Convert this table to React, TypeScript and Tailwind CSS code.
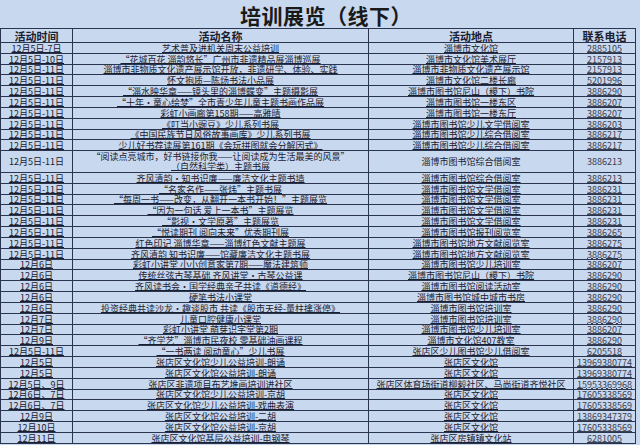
import React from 'react';

type Row = [string, string, string, string, boolean?];

const rows: Row[] = [
  ['12月5日-7日', '艺术普及进机关周末公益培训', '淄博市文化馆', '2885105'],
  ['12月5日-10日', '“花城百花 淄韵悠长”广州市非遗精品展淄博巡展', '淄博市文化馆美术展厅', '2157913'],
  ['12月5日-11日', '淄博市非物质文化遗产展示馆开放，非遗研学、体验、实践', '淄博市非物质文化遗产展示馆', '2157913'],
  ['12月5日-11日', '怀文抱质—陈炀书法小品展', '淄博市文化馆二楼长廊', '5201996'],
  ['12月5日-11日', '“淄水映华章——镜头里的淄博蝶变”主题摄影展', '淄博市图书馆尼山（稷下）书院', '3886290'],
  ['12月5日-11日', '“十年·童心绘梦”全市青少年儿童主题书画作品展', '淄博市图书馆一楼东区', '3886207'],
  ['12月5日-11日', '彩虹小画廊第158期——高雅晴', '淄博市图书馆一楼东厅', '3886207'],
  ['12月5日-11日', '《叮当小豌豆》少儿系列书展', '淄博市图书馆少儿文学借阅室', '3886203'],
  ['12月5日-11日', '《中国民族节日风俗故事画库》少儿系列书展', '淄博市图书馆少儿综合借阅室', '3886217'],
  ['12月5日-11日', '少儿好书荐读展第161期《会玩拼图就会分解因式》', '淄博市图书馆少儿综合借阅室', '3886217'],
  ['12月5日-11日', '“阅读点亮城市，好书链接你我——让阅读成为生活最美的风景”', '淄博市图书馆综合借阅室', '3886213', true],
  ['12月5日-11日', '齐风清韵·知书识廉——廉洁文化主题书墙', '淄博市图书馆综合借阅室', '3886213'],
  ['12月5日-11日', '“名家名作——张炜”主题书展', '淄博市图书馆文学借阅室', '3886231'],
  ['12月5日-11日', '“每周一书——改变，从翻开一本书开始！”主题展览', '淄博市图书馆文学借阅室', '3886231'],
  ['12月5日-11日', '“因为一句话 爱上一本书”主题展览', '淄博市图书馆文学借阅室', '3886231'],
  ['12月5日-11日', '“影视·文学原著”主题展览', '淄博市图书馆文学借阅室', '3886231'],
  ['12月5日-11日', '“悦读期刊 阅向未来”优秀期刊展', '淄博市图书馆报刊阅览室', '3886265'],
  ['12月5日-11日', '红色印记 淄博华章——淄博红色文献主题展', '淄博市图书馆地方文献阅览室', '3886275'],
  ['12月5日-11日', '齐风清韵 知书识廉——馆藏廉洁文化主题书展', '淄博市图书馆地方文献阅览室', '3886275'],
  ['12月6日', '彩虹小讲堂 小小创意家第7期——魔法建筑师', '淄博市图书馆少儿培训室', '3886207'],
  ['12月6日', '传统丝弦古琴基础 齐风讲堂•古琴公益课', '淄博市图书馆尼山（稷下）书院', '3886290'],
  ['12月6日', '齐风读书会•国学经典亲子共读《道德经》', '淄博市图书馆阅读活动室', '3886290'],
  ['12月6日', '硬笔书法小课堂', '淄博市图书馆城中城市书房', '3886290'],
  ['12月6日', '投资经典共读沙龙•趣谈股市 共读《股市天经-量柱擒涨停》', '淄博市图书馆培训室', '3886290'],
  ['12月7日', '儿童口腔健康小课堂', '淄博市图书馆培训室', '3886290'],
  ['12月7日', '彩虹小讲堂 萌芽识字堂第2期', '淄博市图书馆少儿培训室', '3886207'],
  ['12月9日', '“齐学艺”淄博市民夜校 零基础油画课程', '淄博市文化馆407教室', '3886290'],
  ['12月5日-11日', '“一书两读 阅动童心”少儿书展', '张店区少儿图书馆少儿借阅室', '6205518'],
  ['12月5日', '张店区文化馆少儿公益培训-朗诵', '张店区文化馆', '13969380774'],
  ['12月5日', '张店区文化馆公益培训-朗诵', '张店区文化馆', '13969380774'],
  ['12月5日、9日', '张店区非遗项目布艺堆画培训进社区', '张店区体育场街道柳毅社区、马尚街道齐悦社区', '15953369968'],
  ['12月6日、7日', '张店区文化馆少儿公益培训-京胡', '张店区文化馆', '17605338569'],
  ['12月6日、7日', '张店区文化馆少儿公益培训-戏曲表演', '张店区文化馆', '17605338569'],
  ['12月9日', '张店区文化馆公益培训-二胡', '张店区文化馆', '13869347379'],
  ['12月10日', '张店区文化馆公益培训-京胡', '张店区文化馆', '17605338569'],
  ['12月11日', '张店区文化馆基层公益培训-电钢琴', '张店区房镇镇文化站', '6281005'],
];

const cell = 'flex justify-center border-r border-b border-[#2b3550] overflow-hidden whitespace-nowrap';
const ul = 'underline decoration-[0.8px] underline-offset-[0px]';

export default function App() {
  return (
    <div
      className="w-[640px] h-[445px] bg-[#c8d8ee] text-[#1b2030] overflow-hidden"
      style={{ fontFamily: '"Noto Sans CJK SC", "Liberation Sans", sans-serif' }}
    >
      <div className="h-[28px] flex items-center justify-center pl-[12px] pt-[2px] text-[21px] leading-none font-bold tracking-[0.5px] text-[#1a1a1a]">
        培训展览（线下）
      </div>
      <div className="w-[636px] border-l border-t border-[#2b3550]">
        <div className="grid grid-cols-[72px_296px_205px_62px] h-[14px] text-[11px] font-semibold leading-[12px]">
          <div className={`${cell} items-end`}>活动时间</div>
          <div className={`${cell} items-end`}>活动名称</div>
          <div className={`${cell} items-end`}>活动地点</div>
          <div className={`${cell} items-end`}>联系电话</div>
        </div>
        {rows.map((r, i) => {
          const tall = r[4];
          return (
            <div
              key={i}
              className={`grid grid-cols-[72px_296px_205px_62px] text-[9px] leading-[9px] ${tall ? 'h-[21.7px]' : 'h-[10.84px]'}`}
            >
              <div className={`${cell} ${tall ? 'items-center' : `items-end ${ul}`}`}>{r[0]}</div>
              {tall ? (
                <div className={`${cell} flex-col items-center justify-center gap-[1px]`}>
                  <span>{r[1]}</span>
                  <span className={ul}>（自然科学类）主题书展</span>
                </div>
              ) : (
                <div className={`${cell} items-end ${ul}`}>{r[1]}</div>
              )}
              <div className={`${cell} ${tall ? 'items-center' : `items-end ${ul}`}`}>{r[2]}</div>
              <div className={`${cell} ${tall ? 'items-center' : `items-end ${ul}`} text-[#3a4050]`}>{r[3]}</div>
            </div>
          );
        })}
      </div>
    </div>
  );
}
